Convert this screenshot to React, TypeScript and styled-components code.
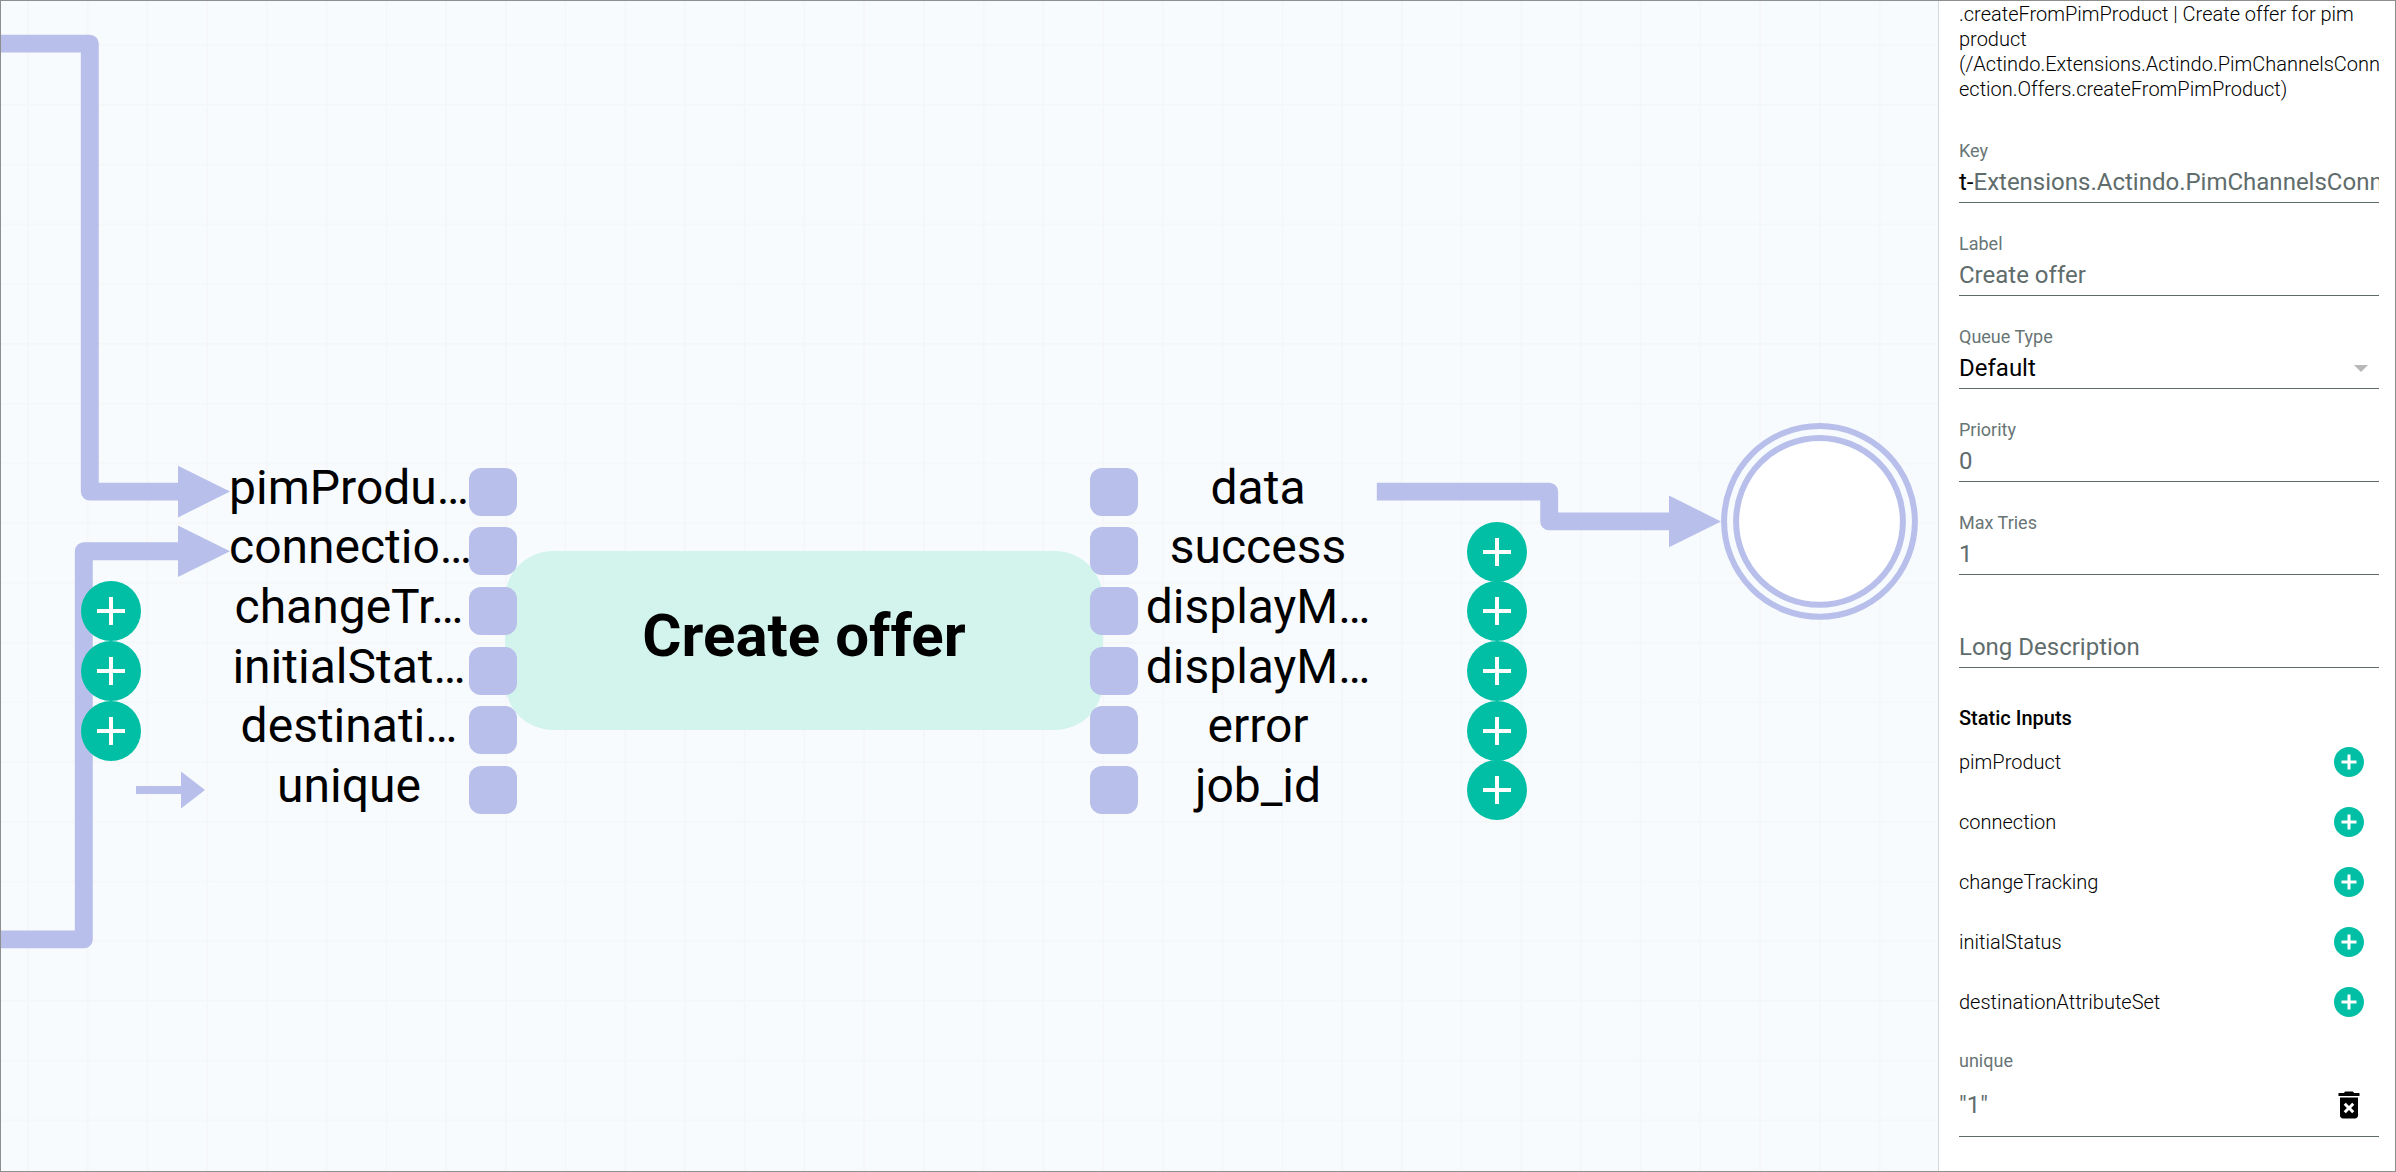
import React from "react";
import styled, { createGlobalStyle } from "styled-components";

const color = {
  canvas: "#f8fbfe",
  grid: "#f5f6f8",
  edge: "#b7bfea",
  task: "#d2f4ed",
  accent: "#00bfa5",
  muted: "#5f6c6c",
  label: "#687575",
  frame: "#8e8e8e",
};

const GlobalStyle = createGlobalStyle`
  *, *::before, *::after { box-sizing: border-box; }
  body { margin: 0; font-family: Roboto, "Noto Sans", sans-serif; color: #000; }
  button, input, select { font: inherit; color: inherit; }
`;

const Page = styled.div`
  display: flex;
  height: 100vh;
  border: 1px solid ${color.frame};
  background: #fff;
`;

/* ---------- diagram ---------- */

const Canvas = styled.main`
  position: relative;
  flex: 1;
  min-width: 0;
  overflow: hidden;
  background: ${color.canvas};
`;

const Drawing = styled.svg`
  position: absolute;
  inset: 0;
  width: 100%;
  height: 100%;
`;

const Task = styled.section`
  position: absolute;
  left: 504px;
  top: 550px;
  width: 598px;
  height: 179px;
  padding-bottom: 10px;
  display: flex;
  align-items: center;
  justify-content: center;
  border-radius: 48px;
  background: ${color.task};
`;

const TaskTitle = styled.h1`
  margin: 0;
  font-size: 60px;
  line-height: 70px;
  font-weight: 700;
`;

const PortList = styled.ul<{ $side: "in" | "out" }>`
  position: absolute;
  left: ${(p) => (p.$side === "in" ? "80px" : "1089px")};
  top: 461px;
  height: 358px;
  margin: 0;
  padding: 0;
  list-style: none;
  display: grid;
  grid-template-rows: repeat(6, minmax(0, 1fr));
`;

const PortRow = styled.li<{ $side: "in" | "out" }>`
  display: grid;
  grid-template-columns: ${(p) => (p.$side === "in" ? "148px 240px 48px" : "48px 240px 149px")};
  grid-template-rows: minmax(0, 1fr);
  align-items: center;
`;

const PortLabel = styled.span`
  padding-bottom: 8px;
  text-align: center;
  white-space: nowrap;
  font-size: 48px;
  line-height: 50px;
`;

const Port = styled.span`
  width: 48px;
  height: 48px;
  border-radius: 12px;
  background: ${color.edge};
`;

const Action = styled.span<{ $side: "in" | "out" }>`
  display: flex;
  align-items: center;
  justify-content: ${(p) => (p.$side === "in" ? "flex-start" : "flex-end")};
`;

const AddButton = styled.button`
  width: 60px;
  height: 60px;
  padding: 0;
  border: 0;
  border-radius: 50%;
  background: ${color.accent};
  svg { display: block; }
`;

const ConstantArrow = styled.svg`
  margin-left: 55px;
`;

type PortInfo = { name: string; action?: "add" | "constant" };

const inputs: PortInfo[] = [
  { name: "pimProdu…" },
  { name: "connectio…" },
  { name: "changeTr…", action: "add" },
  { name: "initialStat…", action: "add" },
  { name: "destinati…", action: "add" },
  { name: "unique", action: "constant" },
];

const outputs: PortInfo[] = [
  { name: "data" },
  { name: "success", action: "add" },
  { name: "displayM…", action: "add" },
  { name: "displayM…", action: "add" },
  { name: "error", action: "add" },
  { name: "job_id", action: "add" },
];

function PortAction({ port, side }: { port: PortInfo; side: "in" | "out" }) {
  return (
    <Action $side={side}>
      {port.action === "add" && (
        <AddButton type="button" aria-label={`Connect ${port.name}`}>
          <svg width="60" height="60" viewBox="0 0 60 60">
            <path d="M16 30H44M30 16V44" stroke="#fff" strokeWidth="4" />
          </svg>
        </AddButton>
      )}
      {port.action === "constant" && (
        <ConstantArrow width="70" height="38" viewBox="0 0 70 38" fill={color.edge}>
          <path d="M0 15H45V0.5L69 19L45 37.5V23H0Z" />
        </ConstantArrow>
      )}
    </Action>
  );
}

function Ports({ side, ports }: { side: "in" | "out"; ports: PortInfo[] }) {
  return (
    <PortList $side={side}>
      {ports.map((port, i) => (
        <PortRow key={i} $side={side}>
          {side === "in" ? <PortAction port={port} side={side} /> : <Port />}
          <PortLabel>{port.name}</PortLabel>
          {side === "in" ? <Port /> : <PortAction port={port} side={side} />}
        </PortRow>
      ))}
    </PortList>
  );
}

function Diagram() {
  return (
    <Canvas>
      <Drawing aria-hidden="true">
        <defs>
          <pattern id="grid" x="26" y="43.3" width="59.73" height="59.73" patternUnits="userSpaceOnUse">
            <path d="M0.9 0V59.73M0 0.9H59.73" stroke={color.grid} strokeWidth="1.8" />
          </pattern>
        </defs>
        <rect width="100%" height="100%" fill="url(#grid)" />
        <g fill="none" stroke={color.edge} strokeWidth="17.9" strokeLinejoin="round">
          <path d="M-20 42.6H88.8V490.6H178" />
          <path d="M-20 938.4H82.8V550.2H178" />
          <path d="M1375.8 490.6H1548.2V520.4H1669" />
        </g>
        <g fill={color.edge}>
          <path d="M177 464.8L229 490.6L177 516.4Z" />
          <path d="M177 524.4L229 550.2L177 576Z" />
          <path d="M1668 494.6L1720 520.4L1668 546.2Z" />
        </g>
        <g stroke={color.edge} strokeWidth="6">
          <circle cx="1818.5" cy="520.4" r="95.4" fill={color.canvas} />
          <circle cx="1818.5" cy="520.4" r="83.4" fill="#fff" />
        </g>
      </Drawing>
      <Task>
        <TaskTitle>Create offer</TaskTitle>
      </Task>
      <Ports side="in" ports={inputs} />
      <Ports side="out" ports={outputs} />
    </Canvas>
  );
}

/* ---------- properties panel ---------- */

const Panel = styled.aside`
  flex: none;
  width: 457px;
  padding: 0 16px 0 20px;
  overflow: hidden;
  border-left: 1px solid #d6d9dc;
  background: #fff;
`;

const Description = styled.p`
  margin: 0 -4px 0 0;
  padding: 1px 0 8px;
  font-size: 20px;
  line-height: 25px;
  font-weight: 300;
  overflow-wrap: anywhere;
`;

const Field = styled.div<{ $bare?: boolean }>`
  display: flex;
  flex-direction: column;
  gap: 7px;
  padding: ${(p) => (p.$bare ? "58px" : "31px")} 0 6px;
  border-bottom: 1px solid ${color.muted};
`;

const FieldLabel = styled.label`
  font-size: 18px;
  line-height: 20px;
  color: ${color.label};
`;

const Control = styled.div`
  position: relative;
  display: flex;
  font-size: 24px;
  line-height: 28px;
`;

const TextInput = styled.input`
  flex: 1;
  min-width: 0;
  width: 100%;
  height: 28px;
  padding: 0;
  border: 0;
  outline: 0;
  background: none;
  font-size: 24px;
  color: ${color.muted};
  &::placeholder { color: ${color.muted}; opacity: 1; }
`;

const Select = styled.select`
  flex: 1;
  height: 28px;
  padding: 0;
  border: 0;
  appearance: none;
  background: none;
`;

const Caret = styled.span`
  position: absolute;
  right: 11px;
  top: 11px;
  border: solid transparent;
  border-width: 7px 7px 0;
  border-top-color: #b8b8b8;
  pointer-events: none;
`;

const SectionTitle = styled.h2`
  margin: 37px 0 1px;
  font-size: 20px;
  line-height: 26px;
  font-weight: 500;
`;

const Inputs = styled.ul`
  margin: 0;
  padding: 0;
  list-style: none;
`;

const InputRow = styled.li`
  display: flex;
  align-items: center;
  justify-content: space-between;
  height: 60px;
  padding-right: 12px;
  font-size: 20px;
  line-height: 26px;
  font-weight: 300;
`;

const IconButton = styled.button<{ $color: string }>`
  flex: none;
  width: 36px;
  height: 36px;
  padding: 0;
  border: 0;
  background: none;
  color: ${(p) => p.$color};
  svg { display: block; }
`;

const StaticValue = styled.div`
  display: flex;
  flex-direction: column;
  gap: 16px;
  padding: 19px 0 13px;
  border-bottom: 1px solid ${color.muted};
`;

const ValueRow = styled.div`
  display: flex;
  align-items: center;
  padding-right: 12px;
`;

const Icon = ({ d }: { d: string }) => (
  <svg width="36" height="36" viewBox="0 0 24 24" fill="currentColor" aria-hidden="true">
    <path d={d} />
  </svg>
);

const ADD_CIRCLE =
  "M12 2C6.48 2 2 6.48 2 12s4.48 10 10 10 10-4.48 10-10S17.52 2 12 2zm5 11h-4v4h-2v-4H7v-2h4V7h2v4h4v2z";
const DELETE_FOREVER =
  "M6 19c0 1.1.9 2 2 2h8c1.1 0 2-.9 2-2V7H6v12zm2.46-7.12l1.41-1.41L12 12.59l2.12-2.12 1.41 1.41L13.41 14l2.12 2.12-1.41 1.41L12 15.41l-2.12 2.12-1.41-1.41L10.59 14l-2.13-2.12zM15.5 4l-1-1h-5l-1 1H5v2h14V4z";

const staticInputs = ["pimProduct", "connection", "changeTracking", "initialStatus", "destinationAttributeSet"];

function Properties() {
  return (
    <Panel>
      <Description>
        .createFromPimProduct | Create offer for pim product
        (/Actindo.Extensions.Actindo.PimChannelsConnection.Offers.createFromPimProduct)
      </Description>
      <Field>
        <FieldLabel htmlFor="key">Key</FieldLabel>
        <Control>
          <span>t-</span>
          <TextInput id="key" defaultValue="Extensions.Actindo.PimChannelsConnection" />
        </Control>
      </Field>
      <Field>
        <FieldLabel htmlFor="label">Label</FieldLabel>
        <Control>
          <TextInput id="label" defaultValue="Create offer" />
        </Control>
      </Field>
      <Field>
        <FieldLabel htmlFor="queue">Queue Type</FieldLabel>
        <Control>
          <Select id="queue" defaultValue="Default">
            <option>Default</option>
          </Select>
          <Caret />
        </Control>
      </Field>
      <Field>
        <FieldLabel htmlFor="priority">Priority</FieldLabel>
        <Control>
          <TextInput id="priority" defaultValue="0" />
        </Control>
      </Field>
      <Field>
        <FieldLabel htmlFor="tries">Max Tries</FieldLabel>
        <Control>
          <TextInput id="tries" defaultValue="1" />
        </Control>
      </Field>
      <Field $bare>
        <Control>
          <TextInput aria-label="Long Description" placeholder="Long Description" />
        </Control>
      </Field>
      <SectionTitle>Static Inputs</SectionTitle>
      <Inputs>
        {staticInputs.map((name) => (
          <InputRow key={name}>
            {name}
            <IconButton type="button" $color={color.accent} aria-label={`Add ${name}`}>
              <Icon d={ADD_CIRCLE} />
            </IconButton>
          </InputRow>
        ))}
      </Inputs>
      <StaticValue>
        <FieldLabel htmlFor="unique">unique</FieldLabel>
        <ValueRow>
          <TextInput id="unique" defaultValue={'"1"'} />
          <IconButton type="button" $color="#000" aria-label="Delete unique">
            <Icon d={DELETE_FOREVER} />
          </IconButton>
        </ValueRow>
      </StaticValue>
    </Panel>
  );
}

export default function App() {
  return (
    <>
      <GlobalStyle />
      <Page>
        <Diagram />
        <Properties />
      </Page>
    </>
  );
}
